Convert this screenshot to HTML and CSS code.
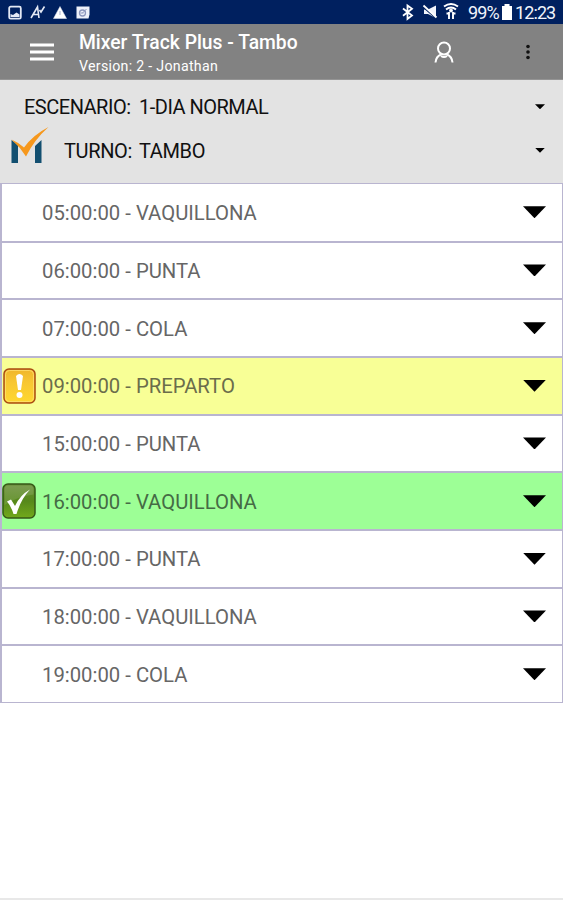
FILE: index.html
```html
<!DOCTYPE html>
<html lang="es">
<head>
<meta charset="utf-8">
<title>Mixer Track Plus</title>
<link rel="stylesheet" href="styles.css">
</head>
<body>
<div class="statusbar">
  <svg class="notifications" width="90" height="24" viewBox="0 0 90 24" fill="none" stroke="#e4e9f5">
    <rect x="9.2" y="6.7" width="11.6" height="12" rx="1.5" stroke-width="1.8"/>
    <path d="M10.500 17v-3l2.500 1 3.500-2.500 3 2v2.500z" fill="#e4e9f5" stroke="none"/>
    <path d="M31 18 37.500 7l1.500 11M33.500 14.500h5M39.500 10l1.500 2L44.500 6.500" stroke-width="1.600"/>
    <path d="M60 6.500 66.500 18.500h-13z" fill="#fff" stroke-width=".5"/>
    <path d="M60 11v4" stroke="#aab4d0"/>
    <path d="M76.500 6.500h13v8l-1 4h-12z" fill="#eef1fa" stroke="none"/>
    <circle cx="82.500" cy="13" r="3" stroke="#8e98bd" stroke-width="1.300"/>
    <path d="m82.500 13 4-4M80.500 13h3" stroke="#8e98bd"/>
  </svg>
  <div class="system">
    <svg width="62" height="24" viewBox="400 0 62 24" fill="none" stroke="#fff">
      <path d="m403 8.500 9 7-4.500 3.500V5.500l4.500 3.200-9 7" stroke-width="1.800"/>
      <path d="M424 9.500h4l8-4V18l-8-4h-4z" fill="#f2f5fc" stroke="none"/>
      <path d="m423 7 14 12" stroke="#00205f" stroke-width="1.500"/>
      <path d="m423.500 5.500 13 12" stroke-width="1.800"/>
      <path d="M444 6.500q7-5 14 0M446 9.500q5-4 10 0" stroke-width="2"/>
      <circle cx="451" cy="10.500" r="1.500" fill="#fff"/>
      <path d="M449 12v7M453 12v7M446.500 13.500h2M453.500 13.500h2" stroke-width="1.900"/>
    </svg>
    <span class="percent">99%</span>
    <svg class="battery" width="10" height="16" viewBox="0 0 10 16"><path d="M0 2h2.500V0h5v2H10v14H0z" fill="#fff"/></svg>
    <span class="clock">12:23</span>
  </div>
</div>
<header class="appbar">
  <svg class="menu" width="24" height="18" viewBox="0 0 24 18"><path d="M0 2h24M0 9h24M0 16h24" stroke="#fff" stroke-width="3"/></svg>
  <div class="titles"><h1>Mixer Track Plus - Tambo</h1><p>Version: 2 - Jonathan</p></div>
  <svg class="user" width="20" height="22" viewBox="0 0 20 22" fill="none" stroke="#fff" stroke-width="2"><circle cx="10" cy="7.500" r="6"/><path d="M1.500 21.500q.5-6 5.500-8M18.500 21.500q-.5-6-5.500-8M7 15q3 2 6 0"/></svg>
  <svg class="more" width="6" height="16" viewBox="0 0 6 16" fill="#111"><circle cx="3" cy="2.500" r="1.800"/><circle cx="3" cy="8" r="1.800"/><circle cx="3" cy="13.500" r="1.800"/></svg>
</header>
<section class="filters">
  <div class="filter"><span class="label scenario">ESCENARIO:</span><span class="value wide">1-DIA NORMAL</span><i class="small-arrow"></i></div>
  <div class="filter">
    <svg class="logo" width="39" height="38" viewBox="0 0 39 38">
      <path d="M1.500 13 8 18v18H1.500zM25 19l6.500-6v23H25z" fill="#124f70"/>
      <path d="M1.500 12.500q7 3 12.500 8Q23 8 38.500 0 24 13 16 29.500 10 20 1.500 12.500z" fill="#f6981d"/>
    </svg>
    <span class="label turn">TURNO:</span><span class="value">TAMBO</span><i class="small-arrow"></i>
  </div>
</section>
<main class="list">
  <div class="row"><span class="icon"></span><span class="name">05:00:00 - VAQUILLONA</span><i class="arrow"></i></div>
  <div class="row"><span class="icon"></span><span class="name">06:00:00 - PUNTA</span><i class="arrow"></i></div>
  <div class="row"><span class="icon"></span><span class="name">07:00:00 - COLA</span><i class="arrow"></i></div>
  <div class="row warning"><span class="icon"><svg width="34" height="36" viewBox="0 0 34 36">
    <defs><linearGradient id="gold" x2="0" y2="1"><stop stop-color="#efb52c"/><stop offset=".4" stop-color="#f8c733"/><stop offset="1" stop-color="#ffd82e"/></linearGradient></defs>
    <rect x="2" y="1" width="31" height="34" rx="5" fill="url(#gold)" stroke="#a94b13" stroke-width="1.500"/>
    <rect x="3.500" y="2.500" width="28" height="31" rx="4" fill="none" stroke="#ffe071" stroke-width=".8"/>
    <path d="M14 8q3.500-4 7 0l-2 14h-3z" fill="#fff"/><circle cx="17.500" cy="27" r="3" fill="#fff"/></svg></span><span class="name">09:00:00 - PREPARTO</span><i class="arrow"></i></div>
  <div class="row"><span class="icon"></span><span class="name">15:00:00 - PUNTA</span><i class="arrow"></i></div>
  <div class="row done"><span class="icon"><svg width="34" height="36" viewBox="0 0 34 36">
    <defs><linearGradient id="leaf" x2="0" y2="1"><stop stop-color="#6b8f3b"/><stop offset=".5" stop-color="#56881a"/><stop offset="1" stop-color="#72a91b"/></linearGradient></defs>
    <rect x="1" y="1" width="32" height="34" rx="5" fill="url(#leaf)" stroke="#365817" stroke-width="1.500"/>
    <path d="M2.500 22V6q0-3.500 4-3.500h21q4 0 4 4v5Q17 13 2.500 22z" fill="#fff" opacity=".12"/>
    <path d="M5 18.500 9 16.500l4 6.500Q18 12 28 6.500 19 16 14.500 31h-3Q9 23 5 18.500z" fill="#fff"/></svg></span><span class="name">16:00:00 - VAQUILLONA</span><i class="arrow"></i></div>
  <div class="row"><span class="icon"></span><span class="name">17:00:00 - PUNTA</span><i class="arrow"></i></div>
  <div class="row"><span class="icon"></span><span class="name">18:00:00 - VAQUILLONA</span><i class="arrow"></i></div>
  <div class="row"><span class="icon"></span><span class="name">19:00:00 - COLA</span><i class="arrow"></i></div>
</main>
<footer class="bottom"></footer>
</body>
</html>
```
FILE: styles.css
```css
* { box-sizing: border-box; }
body { margin: 0; height: 900px; display: flex; flex-direction: column; overflow: hidden; background: #fff; font-family: Roboto, sans-serif; }
h1, p { margin: 0; }
svg { display: block; flex: none; }
.statusbar { height: 24px; flex: none; display: flex; justify-content: space-between; background: #00205f; color: #f1f4fc; font-size: 18px; }
.system { display: flex; align-items: center; width: 163px; white-space: nowrap; }
.percent { width: 34px; margin-left: 6px; padding-top: 1px; letter-spacing: -.9px; }
.clock { padding-top: 1px; margin-left: 3px; letter-spacing: -.9px; }
.appbar { height: 56px; flex: none; display: flex; align-items: center; background: #828282; color: #fff; border-bottom: 1px solid #949494; }
.menu { margin-left: 30px; }
.titles { width: 355px; margin-left: 25px; padding-top: 3px; }
.titles h1 { font-size: 19.3px; line-height: 24px; font-weight: 500; }
.titles p { font-size: 14.2px; letter-spacing: .28px; line-height: 20px; margin-top: 1px; }
.more { margin-left: 71px; }
.filters { height: 103px; flex: none; padding-top: 5px; background: #e3e3e3; color: #111; font-size: 20px; }
.filter { height: 43.5px; display: flex; align-items: center; padding-right: 18px; }
.label, .value { white-space: nowrap; letter-spacing: -.5px; }
.scenario { width: 115px; margin-left: 24px; }
.logo { margin: -8px 0 0 10px; }
.turn { width: 75px; margin-left: 15px; }
.turn, .turn + .value { letter-spacing: -.35px; padding-top: 1px; }
.value { width: 70px; }
.wide { width: 140px; }
.small-arrow { margin-left: auto; width: 10px; height: 5px; background: #000; clip-path: polygon(0 0, 100% 0, 50% 100%); }
.list { height: 520px; flex: none; display: grid; grid-template-rows: repeat(9, 1fr); border-top: 1px solid #b9b5d0; }
.row { display: flex; align-items: center; border: solid #b9b5d0; border-width: 1px 1px 1px 2px; padding-right: 16px; }
.row:first-child { border-top: 0; }
.icon { width: 40px; height: 36px; }
.name { color: #666; font-size: 20.3px; white-space: nowrap; padding-top: 1px; }
.arrow { margin-left: auto; width: 23px; height: 12px; background: #000; clip-path: polygon(0 0, 100% 0, 50% 100%); }
.warning { background: #f8ff96; }
.done { background: #9dff96; }
.warning .name { color: #6b6d4b; }
.done .name { color: #456b45; }
.bottom { margin-top: auto; height: 2px; background: #e8e8e8; }
```
